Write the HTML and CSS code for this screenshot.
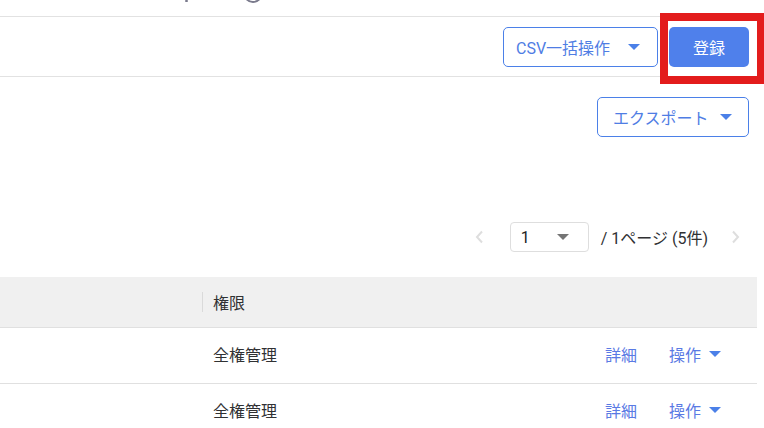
FILE: index.html
```html
<!DOCTYPE html>
<html lang="ja">
<head>
    <meta charset="UTF-8">
    <meta name="viewport" content="width=device-width, initial-scale=1.0">
    <title>ユーザー管理</title>
    <link rel="stylesheet" href="styles.css">
</head>

<body>
    <div class="titlebar">
        <svg class="title-rest" width="100" height="16" viewBox="0 0 100 16">
            <rect x="14" y="0" width="3" height="2" rx="1" fill="#7a7a8c"/>
            <circle cx="82" cy="-7" r="9" fill="none" stroke="#7a7a8c" stroke-width="2"/>
        </svg>
    </div>

    <div class="actionbar">
        <button class="btn btn-outline btn-csv">CSV一括操作<span class="caret"></span></button>
        <div class="highlight">
            <button class="btn btn-primary">登録</button>
        </div>
    </div>

    <div class="exportrow">
        <button class="btn btn-outline btn-export">エクスポート<span class="caret"></span></button>
    </div>

    <div class="pager">
        <svg class="chev" width="10" height="14" viewBox="0 0 10 14"><path d="M7 1.5 2 7l5 5.5" fill="none" stroke="#dedede" stroke-width="2"/></svg>
        <div class="pageselect">
            <span>1</span>
            <span class="caret caret-gray"></span>
        </div>
        <span class="pageinfo">/ 1ページ (5件)</span>
        <svg class="chev" width="10" height="14" viewBox="0 0 10 14"><path d="M3 1.5 8 7l-5 5.5" fill="none" stroke="#dedede" stroke-width="2"/></svg>
    </div>

    <table class="usertable">
        <thead>
            <tr>
                <th class="col-name"></th>
                <th class="col-role"><span class="sep"></span>権限</th>
                <th class="col-actions"></th>
            </tr>
        </thead>
        <tbody>
            <tr>
                <td></td>
                <td class="col-role">全権管理</td>
                <td class="col-actions">
                    <div class="actions">
                        <a class="link">詳細</a>
                        <a class="link">操作<span class="caret"></span></a>
                    </div>
                </td>
            </tr>
            <tr>
                <td></td>
                <td class="col-role">全権管理</td>
                <td class="col-actions">
                    <div class="actions">
                        <a class="link">詳細</a>
                        <a class="link">操作<span class="caret"></span></a>
                    </div>
                </td>
            </tr>
        </tbody>
    </table>
</body>
</html>
```

FILE: styles.css
```css
body {
    margin: 0;
    width: 764px;
    height: 428px;
    overflow: hidden;
    font-family: Roboto, "Noto Sans CJK JP", sans-serif;
    font-size: 16px;
    color: #303133;
    background: #fff;
}

.titlebar {
    height: 16px;
    border-bottom: 1px solid #e2e2e2;
}

.title-rest {
    display: block;
    margin-left: 171px;
}

.actionbar {
    height: 59px;
    border-bottom: 1px solid #e2e2e2;
    display: flex;
    justify-content: flex-end;
    align-items: center;
    gap: 11px;
    padding-right: 15px;
}

.btn {
    height: 40px;
    border-radius: 5px;
    font-family: inherit;
    font-size: 16px;
    cursor: pointer;
    display: flex;
    align-items: center;
}

.btn-outline {
    background: #fff;
    border: 1px solid #4b80e8;
    color: #4f7de4;
}

.btn-csv {
    width: 155px;
    padding: 0 0 0 12px;
    gap: 18px;
}

.btn-export {
    width: 152px;
    padding: 0 0 0 15px;
    gap: 11px;
}

.btn-primary {
    width: 80px;
    justify-content: center;
    background: #4f80eb;
    border: none;
    color: #fff;
}

.highlight {
    position: relative;
}

.highlight::after {
    content: "";
    position: absolute;
    left: -9px;
    top: -14px;
    right: -16px;
    bottom: -17px;
    border: 8px solid #e31c1c;
    pointer-events: none;
}

.caret {
    display: inline-block;
    width: 0;
    height: 0;
    border-left: 6px solid transparent;
    border-right: 6px solid transparent;
    border-top: 6px solid #4b80e8;
}

.caret-gray {
    border-top-color: #757575;
}

.exportrow {
    display: flex;
    justify-content: flex-end;
    padding: 20px 15px 0 0;
}

.pager {
    display: flex;
    justify-content: flex-end;
    align-items: center;
    margin-top: 85px;
    padding-right: 24px;
}

.pager .chev {
    display: block;
}

.pageselect {
    width: 79px;
    height: 30px;
    box-sizing: border-box;
    border: 1px solid #dedede;
    border-radius: 4px;
    margin-left: 25px;
    padding: 0 19px 0 10px;
    display: flex;
    align-items: center;
    justify-content: space-between;
    color: #222;
}

.pageinfo {
    margin: 0 22px 0 12px;
}

.usertable {
    margin-top: 25px;
    width: 757px;
    border-collapse: collapse;
    table-layout: fixed;
}

.usertable th {
    height: 50px;
    background: #f0f0f0;
    font-weight: normal;
    text-align: left;
    border-bottom: 1px solid #e0e0e0;
    padding: 0;
}

.usertable td {
    height: 52px;
    padding: 0 0 3px;
    border-bottom: 1px solid #e0e0e0;
}

.col-name {
    width: 202px;
}

.col-actions {
    width: 170px;
}

.usertable .col-role {
    position: relative;
    padding-left: 11px;
}

.sep {
    position: absolute;
    left: 0;
    top: 15px;
    height: 20px;
    border-left: 1px solid #dadada;
}

.actions {
    display: flex;
    justify-content: flex-end;
    gap: 32px;
    padding-right: 36px;
}

.link {
    color: #5a7ae4;
    display: flex;
    align-items: center;
    gap: 8px;
    cursor: pointer;
}
```
